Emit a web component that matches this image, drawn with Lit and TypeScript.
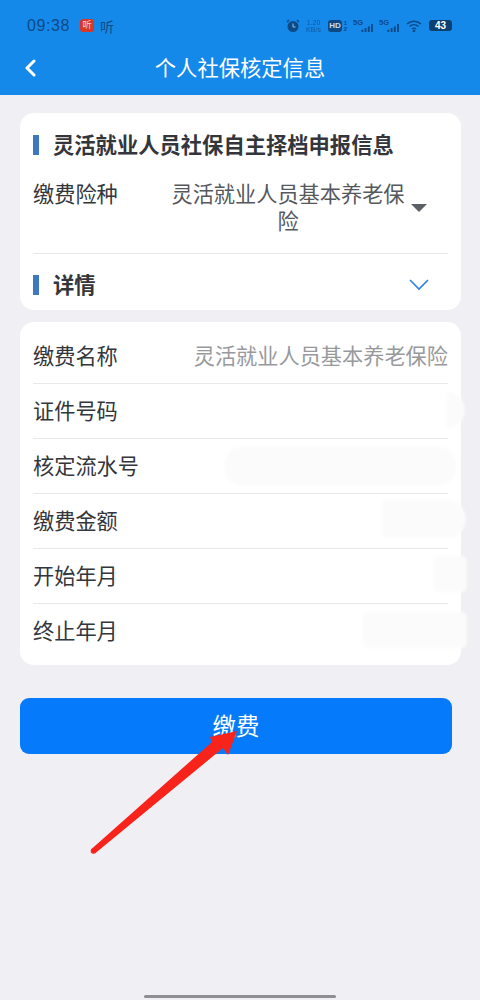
import { LitElement, html, css, svg } from "lit";
import { customElement } from "lit/decorators.js";

const bars = svg`<rect x="0" y="7" width="2.400" height="3"/><rect x="4" y="5" width="2.400" height="5"/><rect x="8" y="3" width="2.400" height="7"/><rect x="12" y="0" width="2.400" height="10"/>`;

@customElement("app-root")
export class AppRoot extends LitElement {
  static styles = css`
    :host { display: block; position: relative; width: 480px; height: 1000px; overflow: hidden; background: #efeff4;
      font-family: "Liberation Sans", "Noto Sans CJK SC", sans-serif; color: #33363b; }
    .head { background: #1589ea; height: 95px; display: flex; flex-direction: column; }
    .status { height: 50px; padding: 1px 27px 0; display: flex; align-items: center; color: #0d4a85; box-sizing: border-box; }
    .time { font-size: 16px; letter-spacing: .6px; width: 53px; }
    .badge { width: 14px; height: 13px; border-radius: 3px; background: #d8382a; color: #f6d8c8; font-size: 9px; line-height: 13px; text-align: center; }
    .ting { font-size: 14px; margin-left: 6px; }
    .icons { margin-left: auto; display: flex; align-items: center; margin-right: 1px; }
    .speed { font-size: 7px; line-height: 7px; text-align: center; width: 17px; margin-left: 5px; opacity: .75; }
    .hd { width: 14px; height: 12px; border-radius: 3px; background: #0d4a85; color: #cde; font-size: 8px; font-weight: 700; line-height: 12px; text-align: center; margin-left: 6px; }
    .sim { font-size: 6px; line-height: 6px; font-weight: 700; text-align: center; margin-left: 1px; width: 5px; }
    .sig { position: relative; width: 21px; height: 12px; margin-left: 5px; }
    .sig span { position: absolute; left: 0; top: -2px; font-size: 7.500px; font-weight: 700; }
    .sig svg { position: absolute; right: 0; bottom: 0; width: 14px; height: 8px; fill: #0d4a85; }
    .batt { width: 23px; height: 11px; border-radius: 3px; background: #0c3f72; color: #fff; font-size: 10px; font-weight: 700; line-height: 11px; text-align: center; margin-left: 7px; }
    .nav { flex: 1; display: flex; align-items: center; justify-content: center; position: relative; color: #fff; font-size: 21.300px; padding-bottom: 13px; }
    .back { position: absolute; left: 24px; top: 8px; width: 12px; height: 20px; }
    .body { padding: 18px 19px 0 20px; display: flex; flex-direction: column; gap: 12px; }
    .card { background: #fff; border-radius: 14px; }
    .c1 { height: 197px; padding: 0 13px; box-sizing: border-box; }
    .title { display: flex; align-items: center; font-size: 21.300px; font-weight: 700; gap: 14px; }
    .title i { width: 6px; height: 20px; background: #3e78bf; flex: none; }
    .title span { margin-bottom: 3px; }
    .t1 { height: 64px; box-sizing: border-box; }
    .kind { display: flex; height: 76px; border-bottom: 1px solid #e8e8eb; font-size: 21.200px; }
    .kind .lab { width: 135px; flex: none; line-height: 36px; }
    .kind .val { width: 240px; flex: none; text-align: center; line-height: 27px; color: #55585c; margin-top: 4px; height: 54px; }
    .tri { width: 0; height: 0; border: 8px solid transparent; border-top: 8px solid #5c5f63; border-bottom: 0; margin: 27px 0 0 3px; }
    .t2 { height: 56px; padding-top: 5px; box-sizing: border-box; }
    .t2 svg { margin-left: auto; margin-right: 19px; }
    .c2 { padding: 7px 13px 5px; height: 343px; box-sizing: border-box; }
    .row { height: 55px; padding-bottom: 4px; border-bottom: 1px solid #e8e8eb; box-sizing: border-box; display: flex; align-items: center; justify-content: space-between; font-size: 21.200px; position: relative; }
    .row:last-child { border-bottom: 0; }
    .row .v { color: #98999c; }
    .smear { position: absolute; background: #fbfbfb; filter: blur(1.500px); }
    .btn { width: 432px; height: 56px; margin-top: 21px; padding-bottom: 2px; box-sizing: border-box; background: #057bfb; color: #fff; border-radius: 9px; font-size: 23.500px; display: flex; align-items: center; justify-content: center; }
    .arrow { position: absolute; left: 88px; top: 725px; width: 150px; height: 130px; }
    .home { position: absolute; left: 144px; bottom: 2px; width: 192px; height: 3px; border-radius: 2px; background: #8f8f93; }
  `;
  render() {
    const sig = html`<div class="sig"><span>5G</span><svg viewBox="0 0 14 10">${bars}</svg></div>`;
    const rows: [string, string, string][] = [
      ["缴费名称", "灵活就业人员基本养老保险", ""],
      ["证件号码", "", "left:414px;top:8px;width:18px;height:36px;border-radius:0 18px 18px 0"],
      ["核定流水号", "", "left:192px;top:8px;width:231px;height:38px;border-radius:16px"],
      ["缴费金额", "", "left:350px;top:6px;width:83px;height:38px;border-radius:0 19px 19px 0"],
      ["开始年月", "", "left:400px;top:7px;width:34px;height:36px;border-radius:5px"],
      ["终止年月", "", "left:330px;top:8px;width:104px;height:36px;border-radius:5px"],
    ];
    return html`
      <div class="head">
        <div class="status">
          <span class="time">09:38</span>
          <span class="badge">听</span>
          <span class="ting">听</span>
          <div class="icons">
            <svg width="14" height="14" viewBox="0 0 14 14"><circle cx="7" cy="7.500" r="5.500" fill="#0d4a85"/><path d="M7 4.500V8h2.500" stroke="#8fc2ee" fill="none"/><path d="M1 3l2-2M13 3l-2-2" stroke="#0d4a85" stroke-width="1.500"/></svg>
            <div class="speed">1.20<br/>KB/s</div>
            <div class="hd">HD</div>
            <div class="sim">1<br/>2</div>
            ${sig}${sig}
            <svg style="margin-left:6px" width="16" height="12" viewBox="0 0 16 12" fill="none" stroke="#0d4a85" stroke-width="1.500"><path d="M1 4c4-3.600 10-3.600 14 0M3.500 6.500c2.600-2.300 6.400-2.300 9 0M6 9c1.200-1 2.800-1 4 0"/><circle cx="8" cy="11" r=".6"/></svg>
            <div class="batt">43</div>
          </div>
        </div>
        <div class="nav">
          <svg class="back" viewBox="0 0 12 20" fill="none" stroke="#fff" stroke-width="3" stroke-linecap="round" stroke-linejoin="round"><path d="M10 3L3 10l7 7"/></svg>
          个人社保核定信息
        </div>
      </div>
      <div class="body">
        <div class="card c1">
          <div class="title t1"><i></i><span>灵活就业人员社保自主择档申报信息</span></div>
          <div class="kind">
            <div class="lab">缴费险种</div>
            <div class="val">灵活就业人员基本养老保险</div>
            <div class="tri"></div>
          </div>
          <div class="title t2"><i></i><span>详情</span>
            <svg width="20" height="12" viewBox="0 0 20 12" fill="none" stroke="#2a82dc" stroke-width="1.600"><path d="M1 1l9 9 9-9"/></svg>
          </div>
        </div>
        <div class="card c2">
          ${rows.map(([k, v, s]) => html`<div class="row"><span>${k}</span><span class="v">${v}</span>${s ? html`<span class="smear" style="${s}"></span>` : ""}</div>`)}
        </div>
        <div class="btn">缴费</div>
      </div>
      <svg class="arrow" viewBox="0 0 150 130">
        <circle cx="5.500" cy="126" r="2.800" fill="#f8231a"/>
        <path d="M3.500 124 L124 17 L122 12 L149 6 L140 30 L135 23 L7.500 128 Z" fill="#f8231a"/>
      </svg>
      <div class="home"></div>
    `;
  }
}
